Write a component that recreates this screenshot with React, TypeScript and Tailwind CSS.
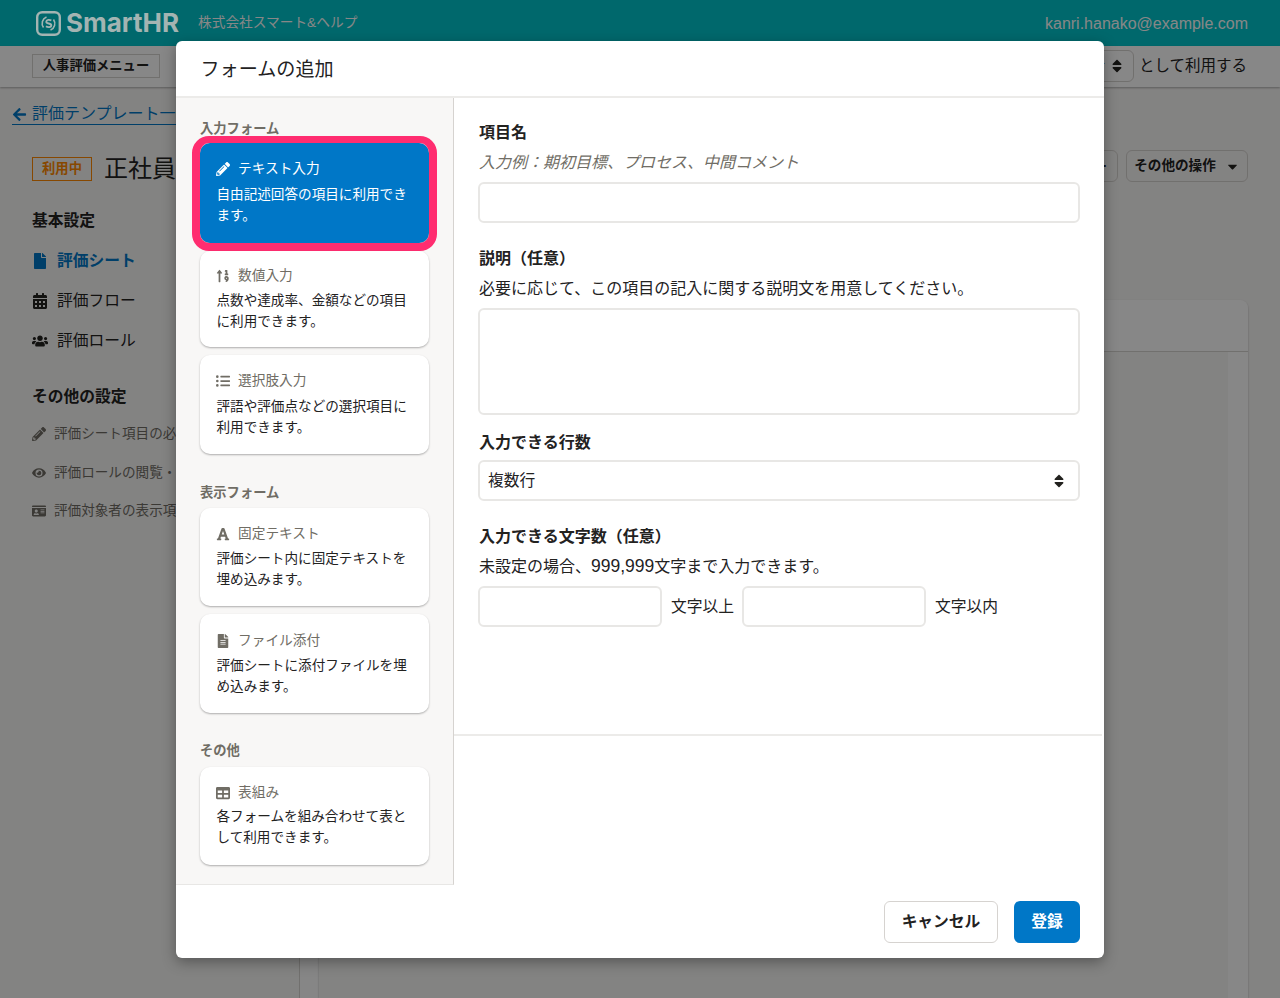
import {
  FaArrowLeft,
  FaCalendarAlt,
  FaCaretDown,
  FaEye,
  FaFile,
  FaFileAlt,
  FaFont,
  FaIdCard,
  FaListUl,
  FaPencilAlt,
  FaSort,
  FaSortNumericUp,
  FaTable,
  FaUsers,
} from 'react-icons/fa';
import type { ReactNode } from 'react';

function Logo() {
  return (
    <div className="relative z-10 flex items-center gap-[5px] text-[#a3b4b2]">
      <svg width="25" height="25" viewBox="0 0 25 25" fill="none" stroke="currentColor">
        <rect x="1.2" y="1.2" width="22.6" height="22.6" rx="5" strokeWidth="2.4" />
        <path d="M7.5 16.5a7 7 0 0 1 3-10.6M17.5 8.5a7 7 0 0 1-3 10.6" strokeWidth="1.6" />
        <path d="M15.3 9.6c-1.6-1.2-5-1-5 1.1 0 2.4 5 1.2 5 3.6 0 2.2-3.5 2.3-5.3 1" strokeWidth="1.9" />
      </svg>
      <span className="text-[26px] leading-none font-bold font-['Inter',sans-serif]">SmartHR</span>
    </div>
  );
}

function SideItem({ icon, label, active }: { icon: ReactNode; label: string; active?: boolean }) {
  return (
    <div className={`flex items-center h-[40px] text-[15.75px] ${active ? 'text-[#0077c7] font-bold' : 'text-[#23221f]'}`}>
      <span className="w-[25px] flex text-[16px]">{icon}</span>
      {label}
    </div>
  );
}

function SubItem({ icon, label }: { icon: ReactNode; label: string }) {
  return (
    <div className="flex items-center h-[38.5px] text-[13.6px] text-[#706d65] whitespace-nowrap">
      <span className="w-[22px] flex text-[14px]">{icon}</span>
      {label}
    </div>
  );
}

function Background() {
  return (
    <div className="h-[998px] flex flex-col bg-[#f8f7f6] overflow-hidden">
      <header className="h-[46px] shrink-0 bg-[#00c4cc] flex items-center pl-[36px] pr-[32px] text-white">
        <Logo />
        <span className="ml-[19px] text-[13.7px]">株式会社スマート&amp;ヘルプ</span>
        <span className="ml-auto pt-[1px] text-[16px]">kanri.hanako@example.com</span>
      </header>
      <div className="h-[41px] shrink-0 bg-white shadow-[0_1px_2px_rgba(0,0,0,0.3)] flex items-center pl-[32px] pr-[33px] pb-[2px]">
        <span className="h-[24px] w-[128px] border border-[#d6d3d0] flex items-center justify-center text-[13.3px] font-bold text-[#23221f]">
          人事評価メニュー
        </span>
        <div className="ml-auto h-[32px] w-[60px] border border-[#d6d3d0] rounded-md flex items-center justify-end gap-[4px] pr-[8px] text-[16px] text-[#23221f]">
          者
          <FaSort className="text-[16px]" />
        </div>
        <span className="ml-[5px] text-[15.5px] text-[#23221f]">として利用する</span>
      </div>
      <div className="flex-1 flex">
        <aside className="w-[299px] shrink-0 pl-[32px] pt-[14px]">
          <div className="-ml-[20px] flex items-center gap-[5px] text-[#0077c7] text-[16px] border-b border-[#0077c7] h-[24px] pt-[3px] w-[300px] whitespace-nowrap">
            <FaArrowLeft className="text-[15px] shrink-0" />
            評価テンプレート一覧
          </div>
          <div className="mt-[31px] flex items-center h-[26px] whitespace-nowrap">
            <span className="w-[60px] h-[24px] border border-[#ff8800] text-[#ff8800] text-[13.3px] font-bold flex items-center justify-center">
              利用中
            </span>
            <span className="ml-[12px] text-[24px] text-[#23221f]">正社員</span>
          </div>
          <div className="mt-[27px] mb-[8px] text-[15.75px] font-bold text-[#23221f] leading-[24px]">基本設定</div>
          <SideItem icon={<FaFile />} label="評価シート" active />
          <SideItem icon={<FaCalendarAlt />} label="評価フロー" />
          <SideItem icon={<FaUsers />} label="評価ロール" />
          <div className="mt-[24px] mb-[6px] text-[15.75px] font-bold text-[#23221f] leading-[24px]">その他の設定</div>
          <SubItem icon={<FaPencilAlt />} label="評価シート項目の必須設定" />
          <SubItem icon={<FaEye />} label="評価ロールの閲覧・編集設定" />
          <SubItem icon={<FaIdCard />} label="評価対象者の表示項目設定" />
        </aside>
        <div className="w-[20px] shrink-0 bg-[#fdfdfd] border-l border-[#d6d3d0]" />
        <main className="flex-1 relative pr-[32px]">
          <div className="mt-[63px] flex justify-end gap-[8px]">
            <span className="h-[32px] w-[60px] border border-[#d6d3d0] rounded-md flex items-center justify-end pr-[10px] text-[14px] font-bold text-[#23221f]">ー</span>
            <span className="h-[32px] w-[122px] border border-[#d6d3d0] rounded-md flex items-center justify-center gap-[9px] text-[13.6px] font-bold text-[#23221f]">
              その他の操作
              <FaCaretDown className="text-[15px]" />
            </span>
          </div>
          <div className="mt-[118px] h-[698px] bg-[#f8f7f6] rounded-t-lg shadow-[0_1px_2px_rgba(0,0,0,0.3)] flex flex-col">
            <div className="h-[52px] bg-white rounded-t-lg border-b border-[#d6d3d0]" />
            <div className="flex-1 flex justify-end">
              <div className="w-[20px] bg-white" />
            </div>
          </div>
        </main>
      </div>
    </div>
  );
}

function FormCard({
  icon,
  title,
  desc,
  box,
  titleGap,
  active,
}: {
  icon: ReactNode;
  title: string;
  desc: ReactNode;
  box: string;
  titleGap: string;
  active?: boolean;
}) {
  return (
    <div
      className={`relative ${box} rounded-[10px] pl-[16px] shadow-[0_1px_2px_rgba(0,0,0,0.3)] ${
        active ? 'bg-[#0077c7] text-white' : 'bg-white text-[#23221f]'
      }`}
    >
      <div className={`flex items-center h-[21px] ${titleGap} text-[13.7px] ${active ? 'text-white' : 'text-[#706d65]'}`}>
        <span className="w-[22px] -mt-[1px] flex text-[14px]">{icon}</span>
        {title}
      </div>
      <p className="ml-[0.5px] text-[13.6px] leading-[21px] whitespace-nowrap">{desc}</p>
      {active && (
        <span className="absolute -inset-x-[8px] -top-[7px] -bottom-[8px] rounded-[17px] border-x-[8px] border-t-[7px] border-b-[8px] border-[#ff2d70]" />
      )}
    </div>
  );
}

function SectionLabel({ children, className }: { children: ReactNode; className: string }) {
  return <div className={`text-[13.3px] font-bold text-[#706d65] leading-[20px] ${className}`}>{children}</div>;
}

function FieldLabel({ children, className }: { children: ReactNode; className: string }) {
  return <div className={`text-[16px] font-bold leading-[24px] text-[#23221f] ${className}`}>{children}</div>;
}

const inputClass = 'block rounded-md border-2 border-[#e8e7e5] bg-white';

function Dialog() {
  return (
    <div className="absolute left-[176px] top-[41px] w-[928px] h-[917px] bg-white rounded-md shadow-[0_4px_14px_rgba(0,0,0,0.35)] flex flex-col overflow-hidden text-[#23221f]">
      <div className="h-[57px] shrink-0 border-b-2 border-[#ecebe9] flex items-center pl-[24.5px] pt-[3px] text-[19.1px]">
        フォームの追加
      </div>
      <div className="h-[787px] shrink-0 flex">
        <div className="w-[278px] shrink-0 bg-[#f8f7f6] border-r border-b border-r-[#d6d3d0] border-b-[#e8e7e5] pl-[24px] pr-[24px] pt-[21px]">
          <SectionLabel className="mb-[4px]">入力フォーム</SectionLabel>
          <div className="flex flex-col gap-[8px]">
            <FormCard
              active
              box="h-[100px] pt-[16px]"
              titleGap="mb-[4px]"
              icon={<FaPencilAlt />}
              title="テキスト入力"
              desc={<>自由記述回答の項目に利用でき<br />ます。</>}
            />
            <FormCard
              box="h-[96px] pt-[15px]"
              titleGap="mb-[3px]"
              icon={<FaSortNumericUp />}
              title="数値入力"
              desc={<>点数や達成率、金額などの項目<br />に利用できます。</>}
            />
            <FormCard
              box="h-[99px] pt-[16px]"
              titleGap="mb-[4px]"
              icon={<FaListUl />}
              title="選択肢入力"
              desc={<>評語や評価点などの選択項目に<br />利用できます。</>}
            />
          </div>
          <SectionLabel className="mt-[29px] mb-[5px]">表示フォーム</SectionLabel>
          <div className="flex flex-col gap-[8px]">
            <FormCard
              box="h-[98px] pt-[16px]"
              titleGap="mb-[3px]"
              icon={<FaFont />}
              title="固定テキスト"
              desc={<>評価シート内に固定テキストを<br />埋め込みます。</>}
            />
            <FormCard
              box="h-[99px] pt-[17px]"
              titleGap="mb-[3px]"
              icon={<FaFileAlt />}
              title="ファイル添付"
              desc={<>評価シートに添付ファイルを埋<br />め込みます。</>}
            />
          </div>
          <SectionLabel className="mt-[28px] mb-[6px]">その他</SectionLabel>
          <FormCard
            box="h-[98px] pt-[16px]"
            titleGap="mb-[2px]"
            icon={<FaTable />}
            title="表組み"
            desc={<>各フォームを組み合わせて表と<br />して利用できます。</>}
          />
        </div>
        <div className="flex-1 min-w-0">
          <div className="h-[638px] border-b-2 border-[#ecebe9] mr-[2px] pl-[24px] pt-[23px]">
            <FieldLabel className="pl-[1px]">項目名</FieldLabel>
            <div className="mt-[6px] pl-[1px] text-[16px] leading-[24px] italic text-[#706d65]">
              入力例：期初目標、プロセス、中間コメント
            </div>
            <div className={`${inputClass} mt-[7px] h-[41px] w-[602px]`} />
            <FieldLabel className="mt-[24px] pl-[1px]">説明（任意）</FieldLabel>
            <div className="mt-[6px] pl-[1px] text-[16px] leading-[24px]">
              必要に応じて、この項目の記入に関する説明文を用意してください。
            </div>
            <div className={`${inputClass} mt-[7px] h-[107px] w-[602px]`} />
            <FieldLabel className="mt-[16px] pl-[1px]">入力できる行数</FieldLabel>
            <div className={`${inputClass} mt-[5px] h-[41px] w-[602px] flex items-center justify-between pl-[8px] pr-[11px] text-[15.75px]`}>
              複数行
              <FaSort className="text-[16px]" />
            </div>
            <FieldLabel className="mt-[24px] pl-[1px]">入力できる文字数（任意）</FieldLabel>
            <div className="mt-[6px] h-[24px] pl-[1px] text-[16px] leading-[24px]">
              未設定の場合、<span className="text-[17.5px] leading-none">999,999</span>文字まで入力できます。
            </div>
            <div className="mt-[7px] flex items-center text-[15.75px]">
              <div className={`${inputClass} h-[41px] w-[184px]`} />
              <span className="ml-[9px] mr-[8px]">文字以上</span>
              <div className={`${inputClass} h-[41px] w-[184px]`} />
              <span className="ml-[9px]">文字以内</span>
            </div>
          </div>
        </div>
      </div>
      <div className="flex-1 flex justify-end items-start gap-[16px] pt-[16px] pr-[24px] text-[15.75px] font-bold">
        <button className="h-[42px] w-[114px] rounded-md border border-[#d6d3d0] bg-white text-[#23221f]">キャンセル</button>
        <button className="h-[42px] w-[66px] rounded-md bg-[#0077c7] text-white">登録</button>
      </div>
    </div>
  );
}

export default function App() {
  return (
    <div className="relative h-[998px] overflow-hidden font-['Liberation_Sans','Noto_Sans_CJK_JP',sans-serif]">
      <Background />
      <div className="absolute inset-0 bg-black/[0.47]" />
      <Dialog />
    </div>
  );
}
